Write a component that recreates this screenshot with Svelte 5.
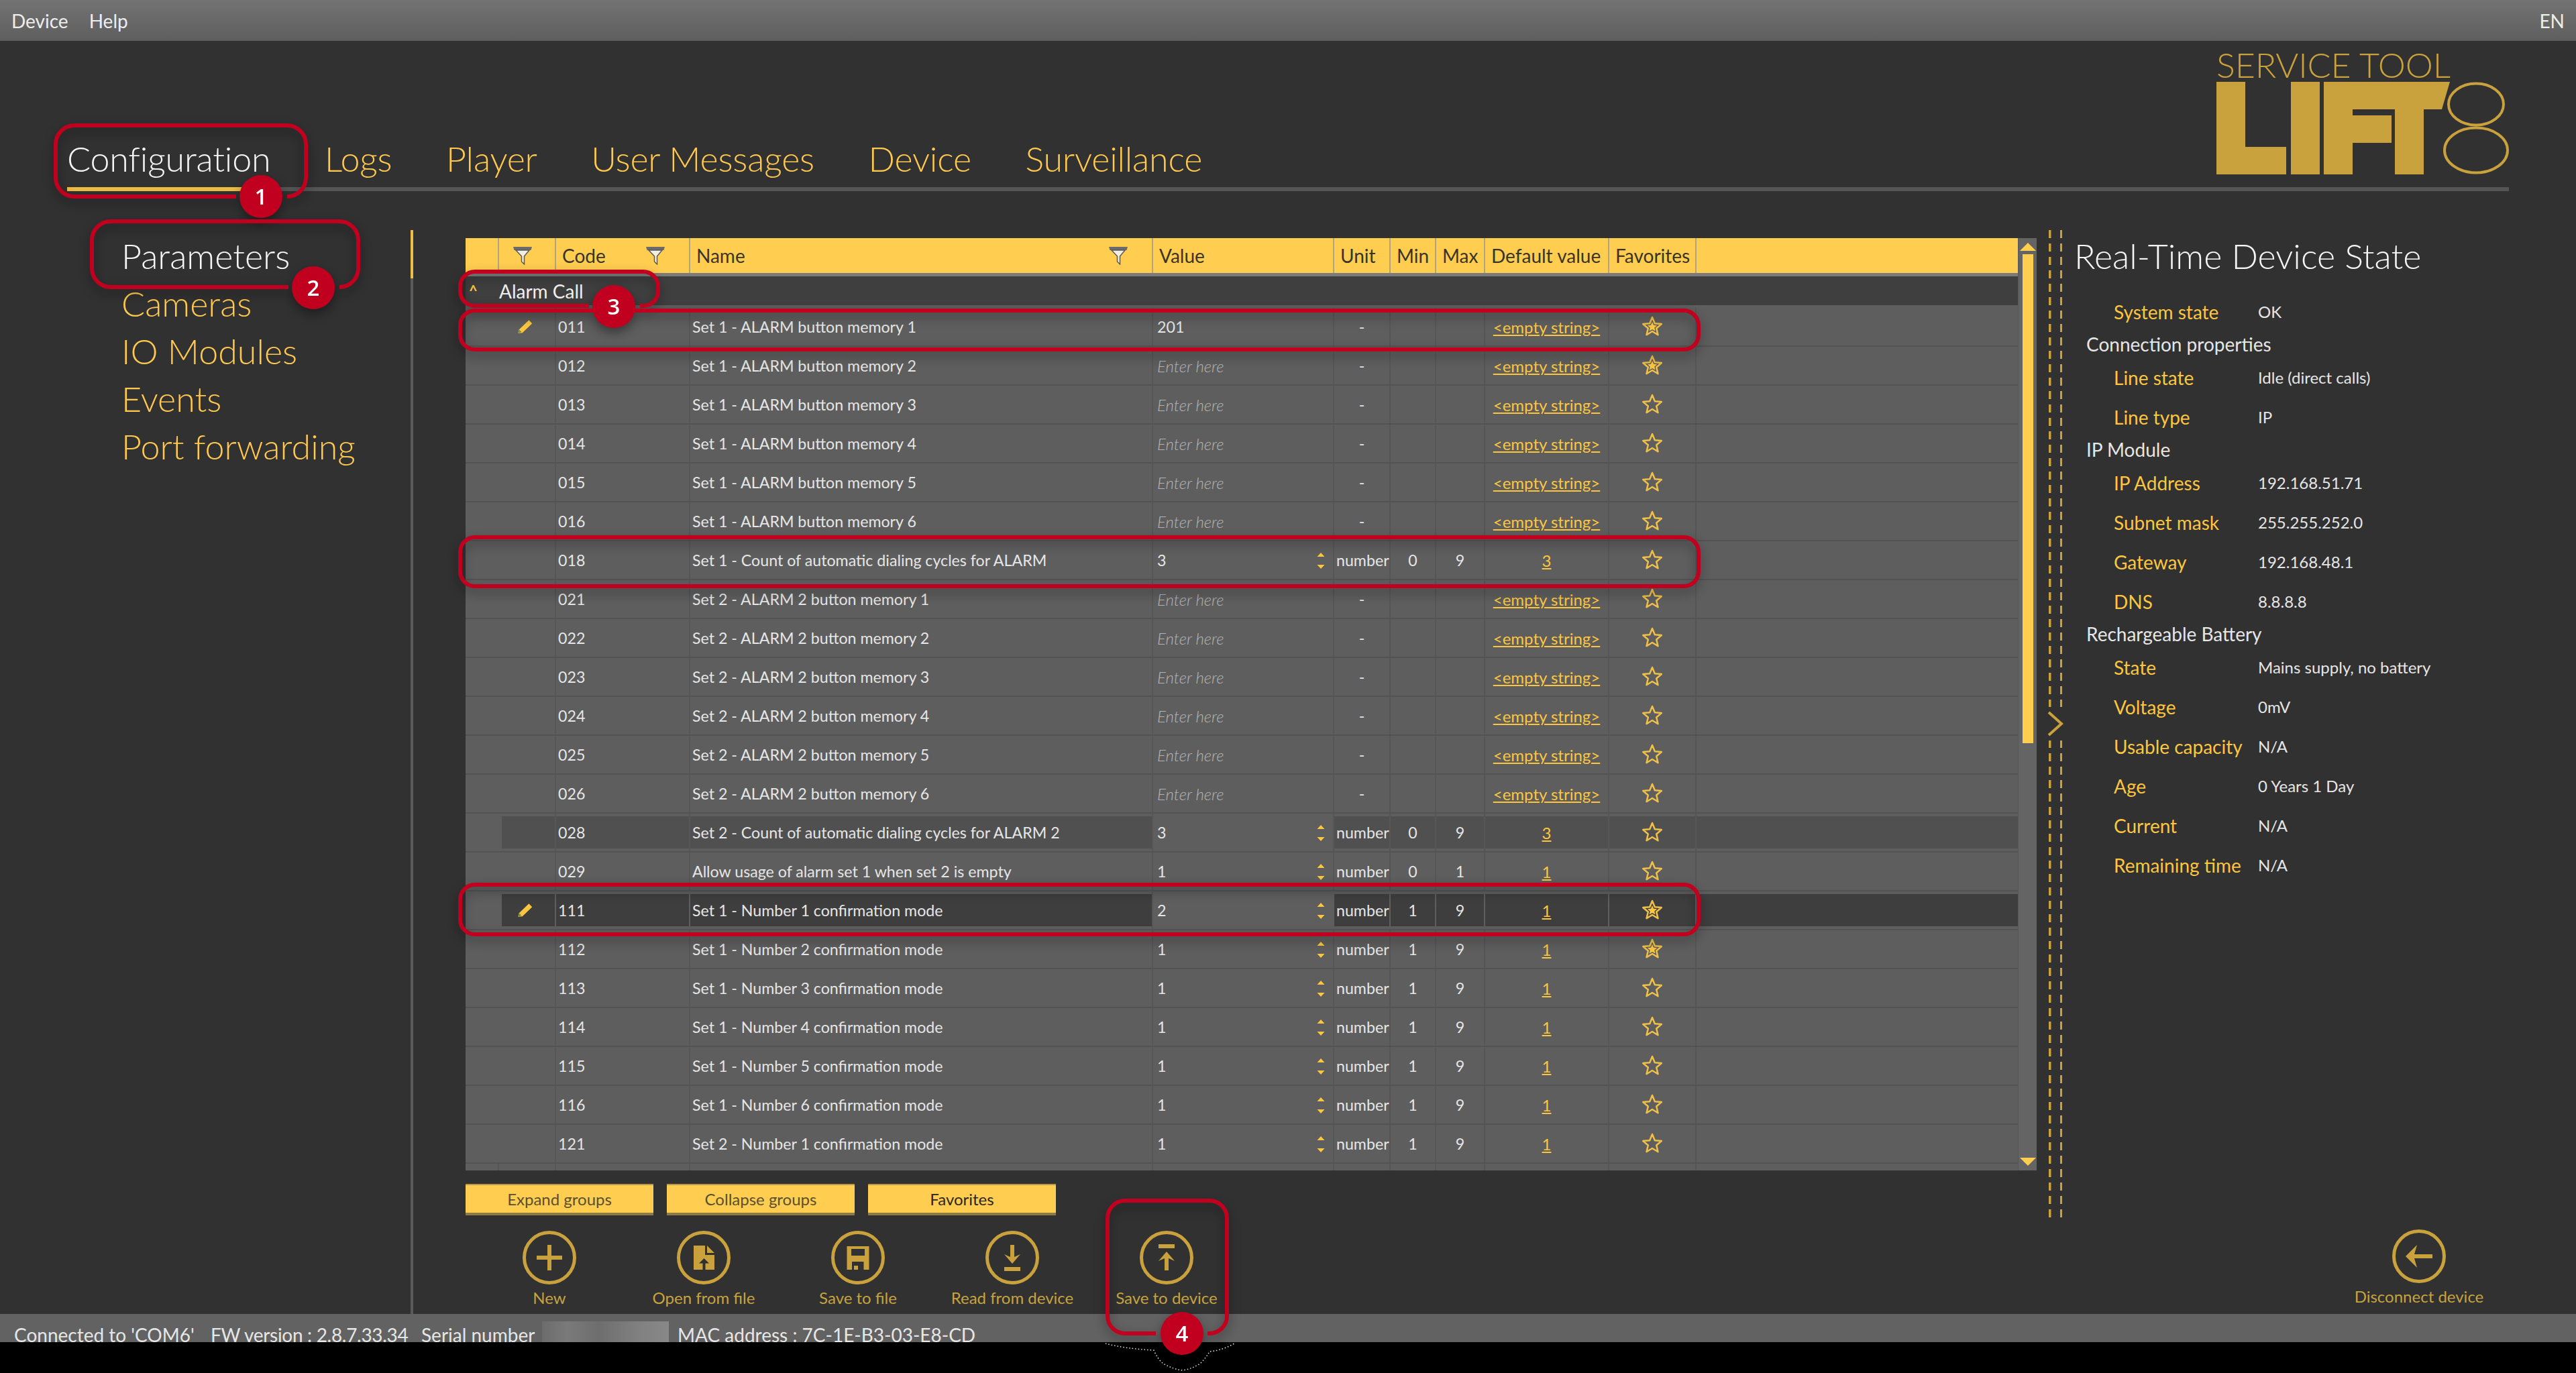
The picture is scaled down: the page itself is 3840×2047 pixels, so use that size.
<script>
	const tabs = ['Configuration', 'Logs', 'Player', 'User Messages', 'Device', 'Surveillance'];
	const sections = ['Parameters', 'Cameras', 'IO Modules', 'Events', 'Port forwarding'];

	const text = (code, name, extra = {}) => ({ code, name, value: '', unit: '-', min: '', max: '', def: '<empty string>', ...extra });
	const num = (code, name, value, min, max, def, extra = {}) => ({ code, name, value, unit: 'number', min, max, def, spin: true, ...extra });

	const rows = [
		text('011', 'Set 1 - ALARM button memory 1', { value: '201', edit: true, fav: true }),
		text('012', 'Set 1 - ALARM button memory 2', { fav: true }),
		text('013', 'Set 1 - ALARM button memory 3'),
		text('014', 'Set 1 - ALARM button memory 4'),
		text('015', 'Set 1 - ALARM button memory 5'),
		text('016', 'Set 1 - ALARM button memory 6'),
		num('018', 'Set 1 - Count of automatic dialing cycles for ALARM', '3', '0', '9', '3'),
		text('021', 'Set 2 - ALARM 2 button memory 1'),
		text('022', 'Set 2 - ALARM 2 button memory 2'),
		text('023', 'Set 2 - ALARM 2 button memory 3'),
		text('024', 'Set 2 - ALARM 2 button memory 4'),
		text('025', 'Set 2 - ALARM 2 button memory 5'),
		text('026', 'Set 2 - ALARM 2 button memory 6'),
		num('028', 'Set 2 - Count of automatic dialing cycles for ALARM 2', '3', '0', '9', '3', { tone: 'alt' }),
		num('029', 'Allow usage of alarm set 1 when set 2 is empty', '1', '0', '1', '1'),
		num('111', 'Set 1 - Number 1 confirmation mode', '2', '1', '9', '1', { tone: 'sel', edit: true, fav: true }),
		num('112', 'Set 1 - Number 2 confirmation mode', '1', '1', '9', '1', { fav: true }),
		num('113', 'Set 1 - Number 3 confirmation mode', '1', '1', '9', '1'),
		num('114', 'Set 1 - Number 4 confirmation mode', '1', '1', '9', '1'),
		num('115', 'Set 1 - Number 5 confirmation mode', '1', '1', '9', '1'),
		num('116', 'Set 1 - Number 6 confirmation mode', '1', '1', '9', '1'),
		num('121', 'Set 2 - Number 1 confirmation mode', '1', '1', '9', '1')
	];

	const state = [
		{ label: 'System state', value: 'OK' },
		{ group: 'Connection properties' },
		{ label: 'Line state', value: 'Idle (direct calls)' },
		{ label: 'Line type', value: 'IP' },
		{ group: 'IP Module' },
		{ label: 'IP Address', value: '192.168.51.71' },
		{ label: 'Subnet mask', value: '255.255.252.0' },
		{ label: 'Gateway', value: '192.168.48.1' },
		{ label: 'DNS', value: '8.8.8.8' },
		{ group: 'Rechargeable Battery' },
		{ label: 'State', value: 'Mains supply, no battery' },
		{ label: 'Voltage', value: '0mV' },
		{ label: 'Usable capacity', value: 'N/A' },
		{ label: 'Age', value: '0 Years 1 Day' },
		{ label: 'Current', value: 'N/A' },
		{ label: 'Remaining time', value: 'N/A' }
	];

	const actions = [
		{ label: 'New', d: 'M37 21h6v16h16v6H43v16h-6V43H21v-6h16z' },
		{ label: 'Open from file', d: 'M25 22h17v14h14v22H25zM45 22l11 11H45z', cut: 'M40.5 41l7.5 7.5h-5.500V58h-4V48.500H33z' },
		{ label: 'Save to file', d: 'M23.500 23h33v35h-8V46H31v12h-7.500zM30 27v10h20V27zM34 52h6v6h-6z' },
		{ label: 'Read from device', d: 'M37 21h6v18l9-4-12 14-12-14 9 4zM28 54h24v6H28z' },
		{ label: 'Save to device', d: 'M28 20h24v6H28zM40 31l12 14-9-4v18h-6V41l-9 4z' }
	];
	const backArrow = 'M20 40l17-17-4 14h27v6H33l4 14z';

	function starPoints(cx, cy, R, r) {
		const pts = [];
		for (let i = 0; i < 10; i++) {
			const a = -Math.PI / 2 + (i * Math.PI) / 5;
			const len = i % 2 ? r : R;
			pts.push(`${(cx + len * Math.cos(a)).toFixed(1)},${(cy + len * Math.sin(a)).toFixed(1)}`);
		}
		return pts.join(' ');
	}
	const starOuter = starPoints(16, 16.5, 14.5, 6.5);
	const starInner = starPoints(16, 16.5, 7.5, 3.5);

	// red call-out frames drawn over the screenshot; gap = opening left for the number badge
	function frame(x0, y0, x1, y1, r, gap) {
		const [g0, g1] = gap ?? [x0 + r, x0 + r];
		return `M${g1} ${y1}H${x1 - r}A${r} ${r} 0 0 0 ${x1} ${y1 - r}V${y0 + r}A${r} ${r} 0 0 0 ${x1 - r} ${y0}H${x0 + r}A${r} ${r} 0 0 0 ${x0} ${y0 + r}V${y1 - r}A${r} ${r} 0 0 0 ${x0 + r} ${y1}H${g0}`;
	}
	const callouts = [
		frame(83, 187, 456, 293, 28, [352, 428]),
		frame(137, 330, 534, 428, 28, [430, 506]),
		frame(686, 405, 981, 456, 22, [878, 954]),
		frame(686, 463, 2532, 521, 22),
		frame(686, 801, 2532, 874, 22),
		frame(686, 1319, 2532, 1393, 22),
		frame(1651, 1790, 1829, 1988, 26, [1723, 1800])
	];
	const badges = [
		{ n: 1, x: 389, y: 293 },
		{ n: 2, x: 467, y: 429 },
		{ n: 3, x: 915, y: 457 },
		{ n: 4, x: 1762, y: 1988 }
	];
</script>

{#snippet funnel()}
	<svg class="funnel" viewBox="0 0 28 27">
		<path d="M0 0h28l-1.500 5h-25z" fill="#6b6b6b" />
		<path d="M4 5h20l-7.500 9v12l-4-4v-8z" fill="#f2efe2" stroke="#5a5a5a" stroke-width="1.500" />
	</svg>
{/snippet}

{#snippet action(item)}
	<button type="button" class="action">
		<svg viewBox="0 0 80 80" class="action-icon">
			<circle cx="40" cy="40" r="37.500" fill="none" stroke="#c9a13d" stroke-width="5" />
			<path d={item.d} fill="#c9a13d" fill-rule="evenodd" />
			{#if item.cut}<path d={item.cut} fill="#313131" />{/if}
		</svg>
		<span>{item.label}</span>
	</button>
{/snippet}

<div class="app">
	<div class="menubar">
		<span>Device</span>
		<span>Help</span>
		<span class="lang">EN</span>
	</div>

	<div class="main">
		<header class="header">
			<nav class="tabs">
				{#each tabs as tab, i}
					<span class="tab" class:active={i === 0}>{tab}</span>
				{/each}
			</nav>
			<svg class="logo" viewBox="0 0 440 190" aria-label="Service Tool Lift 8">
				<text x="4" y="41" textLength="349" class="logo-text">SERVICE TOOL</text>
				<rect x="4" y="47" width="43" height="138" />
				<rect x="4" y="144" width="104" height="41" />
				<rect x="115" y="47" width="43" height="138" />
				<rect x="164" y="47" width="43" height="138" />
				<rect x="164" y="97" width="101" height="41" />
				<path d="M164 47h188l-12 41h-27v97h-43V88h-106z" />
				<ellipse cx="391" cy="80.500" rx="41" ry="31" class="eight" />
				<ellipse cx="391" cy="149" rx="47" ry="33.500" class="eight" />
			</svg>
		</header>

		<div class="body">
			<aside class="sidebar">
				{#each sections as section, i}
					<div class="section" class:active={i === 0}>{section}</div>
				{/each}
			</aside>
			<div class="rail"></div>

			<section class="center">
				<div class="table-wrap">
					<div class="table">
						<div class="grid head">
							<div class="cell first"></div>
							<div class="cell filter-only">{@render funnel()}</div>
							<div class="cell filterable">Code{@render funnel()}</div>
							<div class="cell filterable">Name{@render funnel()}</div>
							<div class="cell">Value</div>
							<div class="cell">Unit</div>
							<div class="cell">Min</div>
							<div class="cell">Max</div>
							<div class="cell">Default value</div>
							<div class="cell">Favorites</div>
							<div class="cell"></div>
						</div>
						<div class="group">
							<span class="caret">^</span>
							<span>Alarm Call</span>
						</div>
						{#each rows as row}
							<div class="grid row {row.tone ?? ''}">
								<div class="cell first"></div>
								<div class="cell pencil">
									{#if row.edit}
										<svg viewBox="0 0 26 24" width="28" height="26">
											<path d="M3 21l1.500-5L18 3l4.500 4.500L9 20.500z" fill="#fcc63f" />
											<path d="M3 21l1.500-5 3.500 3.500z" fill="#7f8f3a" />
										</svg>
									{/if}
								</div>
								<div class="cell code">{row.code}</div>
								<div class="cell name">{row.name}</div>
								<div class="cell value">
									{#if row.value}
										<span>{row.value}</span>
									{:else}
										<span class="placeholder">Enter here</span>
									{/if}
									{#if row.spin}
										<svg class="spin" viewBox="0 0 12 24" width="12" height="24">
											<path d="M6 0l5.500 6H.5zM6 24L.5 18h11z" fill="#fcc63f" />
										</svg>
									{/if}
								</div>
								<div class="cell unit" class:dash={row.unit === '-'}>{row.unit}</div>
								<div class="cell mid">{row.min}</div>
								<div class="cell mid">{row.max}</div>
								<div class="cell mid"><span class="link">{row.def}</span></div>
								<div class="cell mid">
									<svg viewBox="0 0 32 32" width="32" height="32">
										<polygon points={starOuter} fill="none" stroke="#f0c048" stroke-width="2.500" stroke-linejoin="round" />
										{#if row.fav}<polygon points={starInner} fill="#fcc63f" />{/if}
									</svg>
								</div>
								<div class="cell"></div>
							</div>
						{/each}
						<div class="grid row stub">
							<div class="cell first"></div>
							<div class="cell"></div>
							<div class="cell"></div>
							<div class="cell"></div>
							<div class="cell"></div>
							<div class="cell"></div>
							<div class="cell"></div>
							<div class="cell"></div>
							<div class="cell"></div>
							<div class="cell"></div>
							<div class="cell"></div>
						</div>
					</div>
					<div class="scrollbar">
						<svg viewBox="0 0 24 12" width="24" height="12"><path d="M12 0l12 12H0z" fill="#ffcd50" /></svg>
						<div class="thumb"></div>
						<svg class="down" viewBox="0 0 24 12" width="24" height="12"><path d="M0 0h24L12 12z" fill="#ffcd50" /></svg>
					</div>
				</div>

				<div class="buttons">
					<button type="button">Expand groups</button>
					<button type="button">Collapse groups</button>
					<button type="button" class="dark">Favorites</button>
				</div>

				<div class="actions">
					{#each actions as item}
						{@render action(item)}
					{/each}
				</div>
			</section>

			<div class="splitter">
				<svg viewBox="0 0 24 38" width="24" height="38">
					<path d="M2 2l19 17L2 36" fill="none" stroke="#c9a13d" stroke-width="4" />
				</svg>
			</div>

			<section class="panel">
				<h2>Real-Time Device State</h2>
				{#each state as item}
					{#if item.group}
						<div class="state-group">{item.group}</div>
					{:else}
						<div class="state-row">
							<span class="state-label">{item.label}</span>
							<span class="state-value">{item.value}</span>
						</div>
					{/if}
				{/each}
				<div class="disconnect">
					{@render action({ label: 'Disconnect device', d: backArrow })}
				</div>
			</section>
		</div>
	</div>

	<footer class="status">
		<span class="connected">Connected to 'COM6'</span>
		<span class="fw">FW version : 2.8.7.33.34</span>
		<span class="serial">Serial number</span>
		<span class="blurred"></span>
		<span>MAC address : 7C-1E-B3-03-E8-CD</span>
	</footer>

	<svg class="overlay" viewBox="0 0 3840 2047">
		<path
			d="M1648 2003q30 8 72 10q6 14 14 20q14 8 28 10q16-2 28-11q8-8 13-17q20-2 37-12"
			fill="none"
			stroke="#e8e8e8"
			stroke-width="1.500"
			stroke-dasharray="1.500 3"
		/>
		<g class="shadowed">
			{#each callouts as d}
				<path {d} fill="none" stroke="#c1001f" stroke-width="6" />
			{/each}
			{#each badges as b}
				<circle cx={b.x} cy={b.y} r="32" fill="#c1001f" />
				<text x={b.x} y={b.y + 12} class="badge-text">{b.n}</text>
			{/each}
		</g>
	</svg>
</div>

<style>
	:global(body) {
		background: #000;
	}
	.app {
		position: relative;
		width: 3840px;
		height: 2047px;
		overflow: hidden;
		display: flex;
		flex-direction: column;
		background: #000;
		color: #e6e6e6;
		font-family: 'Lato', 'Open Sans', sans-serif;
		font-size: 24px;
	}
	.menubar {
		height: 61px;
		flex: none;
		display: flex;
		align-items: center;
		gap: 31px;
		box-sizing: border-box;
		padding: 0 17px;
		font-size: 28px;
		color: #ededed;
		background: linear-gradient(#737373, #5e5e5e);
	}
	.lang {
		margin-left: auto;
	}
	.main {
		flex: none;
		height: 1898px;
		display: flex;
		flex-direction: column;
		background: #313131;
	}
	.header {
		height: 224px;
		flex: none;
		box-sizing: border-box;
		margin: 0 100px;
		display: flex;
		justify-content: space-between;
		align-items: flex-end;
		border-bottom: 6px solid #555;
	}
	.tabs {
		display: flex;
		gap: 80.5px;
		margin-bottom: -6px;
	}
	.tab {
		font-size: 52px;
		font-weight: 300;
		line-height: 71px;
		letter-spacing: -0.2px;
		padding-bottom: 7px;
		border-bottom: 6px solid transparent;
		color: #ffc94f;
	}
	.tab.active {
		color: #f6f6f6;
		border-bottom-color: #eebd45;
	}
	.logo {
		width: 440px;
		height: 190px;
		margin-bottom: 14px;
		overflow: visible;
		fill: #c9a13d;
	}
	.logo-text {
		font-size: 52px;
		font-weight: 300;
	}
	.eight {
		fill: none;
		stroke: #c9a13d;
		stroke-width: 4;
	}
	.body {
		flex: 1;
		min-height: 0;
		display: flex;
	}
	.sidebar {
		width: 612px;
		flex: none;
		box-sizing: border-box;
		padding: 61px 0 0 181px;
	}
	.section {
		font-size: 52px;
		font-weight: 300;
		line-height: 71px;
		color: #ffc94f;
	}
	.section.active {
		color: #f6f6f6;
	}
	.rail {
		width: 4px;
		flex: none;
		margin-top: 58px;
		background: linear-gradient(#eebd45 72px, #5a5a5a 72px);
	}
	.center {
		width: 2342px;
		flex: none;
		margin-left: 78px;
		padding-top: 70px;
	}
	.table-wrap {
		height: 1390px;
		display: flex;
		background: #5e5e5e;
	}
	.table {
		flex: 1;
		min-width: 0;
		overflow: hidden;
	}
	.grid {
		display: grid;
		grid-template-columns: 48px 85px 200px 690px 270px 84px 68px 73px 185px 130px 1fr;
	}
	.cell {
		box-sizing: border-box;
		border-left: 2px solid #565656;
		min-width: 0;
		display: flex;
		align-items: center;
	}
	.cell.first {
		border-left: none;
	}
	.head {
		height: 57px;
		box-sizing: border-box;
		border-bottom: 5px solid #7b7b7b;
		background: #ffcd50;
		color: #3a3428;
		font-size: 28px;
	}
	.head .cell {
		border-left-color: #b0a582;
		padding-left: 9px;
		white-space: nowrap;
	}
	.head .filter-only {
		justify-content: center;
		padding: 0 14px 0 0;
	}
	.head .filterable {
		justify-content: space-between;
		padding-right: 36px;
	}
	.funnel {
		width: 28px;
		height: 27px;
		flex: none;
	}
	.group {
		height: 47px;
		box-sizing: border-box;
		border-bottom: 4px solid #5e5e5e;
		background: #3f3f3f;
		display: flex;
		align-items: center;
		font-size: 28px;
		color: #f0f0f0;
	}
	.caret {
		width: 50px;
		padding-left: 5px;
		box-sizing: border-box;
		color: #fcc63f;
		font-size: 22px;
		font-weight: 700;
		line-height: 1;
	}
	.row {
		height: 58px;
		box-sizing: border-box;
		border-bottom: 2px solid #535353;
		font-size: 23.2px;
	}
	.row.stub {
		height: 10px;
		border-bottom: none;
	}
	.row.alt .cell:not(.first):not(.value) {
		background: #505050;
		box-shadow:
			inset 0 4px 0 #5e5e5e,
			inset 0 -4px 0 #5e5e5e;
	}
	.row.sel .cell:not(.first):not(.value) {
		background: #3e3e3e;
		box-shadow:
			inset 0 4px 0 #5e5e5e,
			inset 0 -4px 0 #5e5e5e;
		border-left-color: #5e5e5e;
	}
	.row.alt .cell.pencil:not(.first):not(.value),
	.row.sel .cell.pencil:not(.first):not(.value) {
		box-shadow:
			inset 6px 0 0 #5e5e5e,
			inset 0 4px 0 #5e5e5e,
			inset 0 -4px 0 #5e5e5e;
	}
	.pencil {
		border-left: none;
		justify-content: center;
		padding-right: 4px;
	}
	.code {
		padding-left: 3px;
	}
	.name {
		padding-left: 3px;
	}
	.value {
		padding: 0 12px 0 6px;
		justify-content: space-between;
	}
	.placeholder {
		color: #b4b4b4;
		font-style: italic;
		font-weight: 300;
		font-size: 24px;
	}
	.spin {
		margin-top: 1px;
	}
	.unit {
		padding-left: 3px;
	}
	.unit.dash {
		justify-content: center;
		padding-left: 0;
	}
	.mid {
		justify-content: center;
	}
	.link {
		color: #fcc63f;
		font-size: 24px;
		text-decoration: underline;
		white-space: nowrap;
	}
	.scrollbar {
		width: 28px;
		flex: none;
		display: flex;
		flex-direction: column;
		align-items: center;
		padding: 7px 0;
		box-sizing: border-box;
		background: #646464;
		border-left: 1px solid #565656;
	}
	.thumb {
		width: 16px;
		height: 729px;
		margin-top: 5px;
		background: #ffcd50;
	}
	.down {
		margin-top: auto;
	}
	.buttons {
		display: flex;
		gap: 20px;
		margin-top: 20px;
	}
	.buttons button {
		width: 280px;
		height: 47px;
		box-sizing: border-box;
		border: none;
		border-top: 2px solid #b89a4a;
		border-bottom: 4px solid #8d7a45;
		padding: 0;
		background: #ffcd50;
		color: #5a5030;
		font-family: inherit;
		font-size: 24px;
	}
	.buttons .dark {
		color: #2c2618;
	}
	.actions {
		display: flex;
		margin-top: 23px;
		padding-left: 10px;
	}
	.action {
		width: 230px;
		display: flex;
		flex-direction: column;
		align-items: center;
		gap: 5px;
		padding: 0;
		border: none;
		background: none;
		color: #c7a33f;
		font-family: inherit;
		font-size: 24px;
		line-height: 30px;
		white-space: nowrap;
	}
	.action-icon {
		width: 80px;
		height: 80px;
	}
	.splitter {
		width: 20px;
		height: 1472px;
		flex: none;
		margin: 58px 0 0 18px;
		display: flex;
		align-items: center;
		justify-content: center;
		background:
			repeating-linear-gradient(#c9a13d 0 12px, transparent 12px 20px) left top / 3.5px 100% no-repeat,
			repeating-linear-gradient(#c9a13d 0 12px, transparent 12px 20px) right top / 3.5px 100% no-repeat;
	}
	.splitter svg {
		flex: none;
		background: #313131;
		padding: 6px 0;
	}
	.panel {
		flex: 1;
		min-width: 0;
		margin-left: 18px;
		display: flex;
		flex-direction: column;
	}
	h2 {
		margin: 61px 0 18px;
		font-size: 52px;
		font-weight: 300;
		line-height: 71px;
		color: #f6f6f6;
	}
	.state-group {
		height: 39px;
		line-height: 39px;
		padding-left: 18px;
		font-size: 28px;
		color: #e6e6e6;
	}
	.state-row {
		height: 59px;
		display: flex;
		align-items: center;
		padding-left: 59px;
	}
	.state-label {
		width: 215px;
		flex: none;
		font-size: 28px;
		color: #fcc63f;
	}
	.state-value {
		font-size: 24px;
		color: #e6e6e6;
	}
	.disconnect {
		margin-top: auto;
		margin-left: 399px;
		padding-bottom: 11px;
	}
	.status {
		height: 42px;
		flex: none;
		box-sizing: border-box;
		overflow: hidden;
		display: flex;
		align-items: flex-start;
		padding: 20px 0 0 21px;
		background: #626262;
		font-size: 28px;
		line-height: 22px;
		color: #e6e6e6;
		white-space: nowrap;
	}
	.connected {
		width: 293px;
		flex: none;
	}
	.fw {
		width: 314px;
		flex: none;
		letter-spacing: -0.3px;
	}
	.serial {
		width: 180px;
		flex: none;
	}
	.blurred {
		width: 189px;
		height: 32px;
		flex: none;
		margin: -9px 13px 0 0;
		background: linear-gradient(90deg, #6c6c6c, #7a7a7a 20%, #6e6e6e 45%, #808080 75%, #888 100%);
	}
	.overlay {
		position: absolute;
		inset: 0;
		width: 3840px;
		height: 2047px;
		pointer-events: none;
	}
	.shadowed {
		filter: drop-shadow(0 7px 8px rgba(0, 0, 0, 0.4));
	}
	.badge-text {
		fill: #fff;
		font-family: 'Open Sans', sans-serif;
		font-size: 33px;
		font-weight: 600;
		text-anchor: middle;
	}
</style>
